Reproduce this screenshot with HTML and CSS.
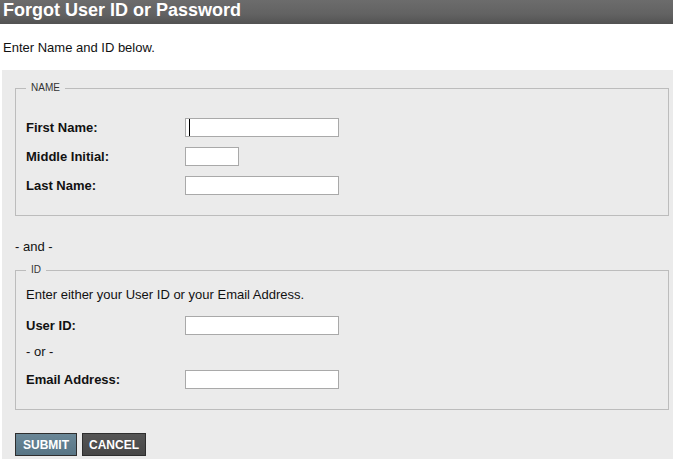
FILE: index.html
```html
<!DOCTYPE html>
<html>
<head>
<meta charset="utf-8">
<title>Forgot User ID or Password</title>
<link rel="stylesheet" href="styles.css">
</head>
<body>
<div class="header">Forgot User ID or Password</div>
<p class="intro">Enter Name and ID below.</p>
<div class="panel">
  <fieldset class="group group-name">
    <legend>NAME</legend>
    <div class="row"><label>First Name:</label><input class="field caret" type="text"></div>
    <div class="row"><label>Middle Initial:</label><input class="field small" type="text"></div>
    <div class="row"><label>Last Name:</label><input class="field" type="text"></div>
  </fieldset>
  <div class="and">- and -</div>
  <fieldset class="group group-id">
    <legend>ID</legend>
    <div class="note">Enter either your User ID or your Email Address.</div>
    <div class="row"><label>User ID:</label><input class="field" type="text"></div>
    <div class="or">- or -</div>
    <div class="row"><label>Email Address:</label><input class="field" type="text"></div>
  </fieldset>
  <div class="buttons">
    <button class="btn btn-submit">SUBMIT</button>
    <button class="btn btn-cancel">CANCEL</button>
  </div>
</div>
</body>
</html>
```
FILE: styles.css
```css
html, body {
  margin: 0;
  padding: 0;
  background: #ffffff;
  font-family: "Liberation Sans", Arial, sans-serif;
  color: #111;
}
body {
  height: 459px;
  display: flex;
  flex-direction: column;
}
.header {
  height: 24px;
  line-height: 21px;
  padding-left: 3px;
  font-size: 18px;
  font-weight: bold;
  color: #fff;
  background: linear-gradient(#6c6c6c, #626262 60%, #525252);
}
.intro {
  margin: 0;
  padding: 16px 0 0 3px;
  height: 46px;
  box-sizing: border-box;
  font-size: 13px;
  line-height: 15px;
}
.panel {
  flex: 1;
  margin-left: 2px;
  background: #ebebeb;
  padding: 12px 4px 0 13px;
}
.group {
  margin: 0;
  border: 1px solid #bcbcbc;
  padding: 0 10px;
}
.group legend {
  font-size: 10px;
  line-height: 12px;
  color: #333;
  padding: 0 5px;
}
.group-name {
  padding-top: 19px;
  padding-bottom: 15px;
}
.group-id {
  padding-top: 11px;
  padding-bottom: 15px;
}
.row {
  display: flex;
  align-items: center;
  height: 29px;
}
.row label {
  width: 159px;
  font-size: 13px;
  font-weight: bold;
}
.field {
  box-sizing: border-box;
  width: 154px;
  height: 19px;
  margin: 0;
  border: 1px solid #a9a9a9;
  background: #fff;
  padding: 0 2px;
}
.field.small {
  width: 54px;
}
.field.caret {
  box-shadow: inset 3px 0 0 #fff, inset 4px 0 0 #000;
}
.and {
  font-size: 13px;
  line-height: 15px;
  padding: 23px 0 10px 0;
}
.note {
  font-size: 13px;
  line-height: 15px;
  height: 24px;
}
.or {
  font-size: 13px;
  line-height: 15px;
  padding: 4px 0 6px 0;
}
.buttons {
  display: flex;
  gap: 5px;
  margin-top: 23px;
}
.btn {
  height: 23px;
  padding: 0 7px;
  border: 1px solid #2e2e2e;
  color: #fff;
  font-family: "Liberation Sans", Arial, sans-serif;
  font-size: 12px;
  font-weight: bold;
  cursor: pointer;
}
.btn-submit {
  background: linear-gradient(#6a8797, #587585);
}
.btn-cancel {
  padding: 0 6px;
  background: linear-gradient(#555555, #474747);
}
```
